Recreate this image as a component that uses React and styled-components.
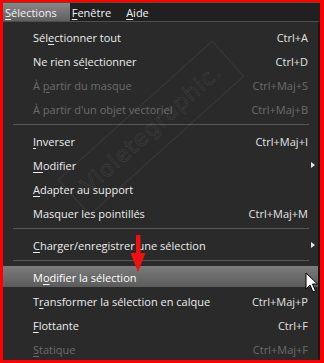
import React from "react";
import styled, { createGlobalStyle } from "styled-components";

const Global = createGlobalStyle`
  html, body { margin: 0; padding: 0; background: #1f1f1f; }
  body { font-family: "Open Sans", "DejaVu Sans", sans-serif; }
`;

const Frame = styled.div`
  position: relative;
  width: 324px;
  height: 363px;
  box-sizing: border-box;
  border-style: solid;
  border-color: #ff0000;
  border-width: 2px 4px 3px 3px;
  background: #1f1f1f;
  overflow: hidden;
  display: flex;
  flex-direction: column;
`;

const MenuBar = styled.div`
  display: flex;
  height: 22px;
  border-top: 1px solid #6a4a2a;
  background: #202020;
  font-size: 11px;
  color: #f2f2f2;
`;

const BarItem = styled.div`
  display: flex;
  align-items: center;
  padding: 1px 13px 0 2px;
  background: ${(p) => (p.$open ? "linear-gradient(#878787, #5f5f5f)" : "transparent")};
`;

const Dropdown = styled.div`
  flex: 1;
  background: #2a2a2a;
  border-top: 1px solid #4e4e4e;
  border-right: 2px solid #171717;
  padding-top: 2px;
`;

const Item = styled.div`
  display: grid;
  grid-template-columns: 1fr auto 10px;
  align-items: center;
  box-sizing: border-box;
  height: 24px;
  padding: 2px 0 0 30px;
  font-size: 11px;
  color: ${(p) => (p.$off ? "#6c6c6c" : "#ececec")};
  ${(p) =>
    p.$active &&
    `
    background: linear-gradient(#7b7b7b, #5c5c5c) padding-box;
    border-top: 2px solid transparent;
    border-bottom: 1px solid transparent;
    padding-top: 1px;
    color: #ffffff;
  `}
`;

const Shortcut = styled.span`
  color: ${(p) => (p.$off ? "#6c6c6c" : "#e2e2e2")};
`;

const Arrow = styled.span`
  justify-self: center;
  width: 0;
  height: 0;
  border-top: 3.5px solid transparent;
  border-bottom: 3.5px solid transparent;
  border-left: 4px solid #e8e8e8;
`;

const Separator = styled.div`
  height: 8px;
  display: flex;
  align-items: center;
  padding: 0 9px 0 10px;
  &::after {
    content: "";
    flex: 1;
    height: 1px;
    background: #565656;
  }
`;

const Key = styled.u`
  text-decoration: underline;
  text-underline-offset: 2px;
  text-decoration-thickness: 1px;
`;

const Watermark = styled.div`
  position: absolute;
  left: 44px;
  top: 102px;
  width: 206px;
  height: 46px;
  transform: rotate(-42deg);
  border: 1px solid rgba(255, 255, 255, 0.07);
  display: flex;
  align-items: center;
  justify-content: center;
  font-family: "DejaVu Sans", sans-serif;
  font-size: 22px;
  letter-spacing: 1px;
  color: rgba(255, 255, 255, 0.02);
  -webkit-text-stroke: 0.6px rgba(255, 255, 255, 0.11);
  pointer-events: none;
`;

const Overlay = styled.svg`
  position: absolute;
  pointer-events: none;
`;

const m = (text, i) =>
  i == null ? text : (
    <>
      {text.slice(0, i)}
      <Key>{text[i]}</Key>
      {text.slice(i + 1)}
    </>
  );

const entries = [
  { label: "Sélectionner tout", k: 3, sc: "Ctrl+A" },
  { label: "Ne rien sélectionner", k: 10, sc: "Ctrl+D" },
  { label: "À partir du masque", k: 2, sc: "Ctrl+Maj+S", off: true },
  { label: "À partir d'un objet vectoriel", sc: "Ctrl+Maj+B", off: true },
  "sep",
  { label: "Inverser", k: 0, sc: "Ctrl+Maj+I" },
  { label: "Modifier", k: 0, sub: true },
  { label: "Adapter au support", k: 0 },
  { label: "Masquer les pointillés", sc: "Ctrl+Maj+M" },
  "sep",
  { label: "Charger/enregistrer une sélection", k: 0, sub: true },
  "sep",
  { label: "Modifier la sélection", k: 1, active: true },
  { label: "Transformer la sélection en calque", k: 1, sc: "Ctrl+Maj+P" },
  { label: "Flottante", k: 0, sc: "Ctrl+F" },
  { label: "Statique", k: 0, sc: "Ctrl+Maj+F", off: true },
];

export default function App() {
  return (
    <>
      <Global />
      <Frame>
        <MenuBar>
          <BarItem $open>{m("Sélections", 0)}</BarItem>
          <BarItem>{m("Fenêtre", 0)}</BarItem>
          <BarItem>{m("Aide", 0)}</BarItem>
        </MenuBar>
        <Dropdown>
          {entries.map((e, i) =>
            e === "sep" ? (
              <Separator key={i} />
            ) : (
              <Item key={i} $off={e.off} $active={e.active}>
                <span>{m(e.label, e.k)}</span>
                <Shortcut $off={e.off}>{e.sc || ""}</Shortcut>
                {e.sub ? <Arrow /> : <span />}
              </Item>
            )
          )}
        </Dropdown>

        <Watermark>Violetegraphic.</Watermark>

        {/* red arrow pointing at the item */}
        <Overlay style={{ left: 125, top: 233 }} width="20" height="40" viewBox="0 0 20 40">
          <rect x="8" y="0" width="4.5" height="20" fill="#ee1111" />
          <polygon points="2.5,18 17.5,18 10,37" fill="#ee1111" />
        </Overlay>

        {/* mouse cursor */}
        <Overlay style={{ left: 302, top: 270 }} width="14" height="22" viewBox="0 0 14 22">
          <path
            d="M1 1 L1 17 L5 13 L8 20 L10.5 19 L7.5 12 L12.5 12 Z"
            fill="#ffffff"
            stroke="#000000"
            strokeWidth="1"
            strokeLinejoin="miter"
          />
        </Overlay>
      </Frame>
    </>
  );
}
